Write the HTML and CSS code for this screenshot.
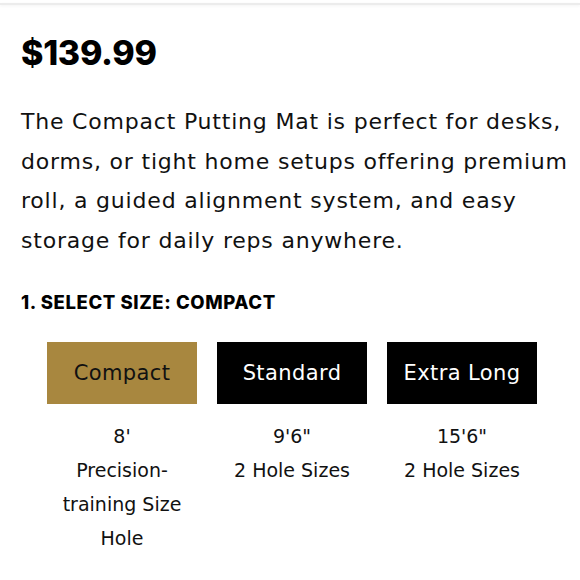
FILE: index.html
```html
<!DOCTYPE html>
<html lang="en">
<head>
<meta charset="utf-8">
<title>Compact Putting Mat</title>
<link rel="stylesheet" href="styles.css">
</head>
<body>
<div class="header-edge"></div>
<main class="product">
  <h2 class="price">$139.99</h2>
  <p class="description">The Compact Putting Mat is perfect for desks, dorms, or tight home setups offering premium roll, a guided alignment system, and easy storage for daily reps anywhere.</p>
  <h3 class="option-title">1. Select Size: Compact</h3>
  <div class="options">
    <div class="option">
      <button class="option-btn selected">Compact</button>
      <div class="option-info">8'<br>Precision-training Size Hole</div>
    </div>
    <div class="option">
      <button class="option-btn">Standard</button>
      <div class="option-info">9'6"<br>2 Hole Sizes</div>
    </div>
    <div class="option">
      <button class="option-btn">Extra Long</button>
      <div class="option-info">15'6"<br>2 Hole Sizes</div>
    </div>
  </div>
</main>
</body>
</html>
```
FILE: styles.css
```css
* { box-sizing: border-box; }
html, body { margin: 0; padding: 0; background: #fff; }
body {
  font-family: "DejaVu Sans", "Open Sans", sans-serif;
  color: #000;
  width: 580px;
  height: 580px;
  overflow: hidden;
}
.header-edge {
  height: 2px;
  margin-top: 3px;
  background: #ececec;
  box-shadow: 0 1px 3px rgba(0,0,0,0.06);
}
.product {
  padding: 0 10px 0 21px;
}
.price {
  margin: 28px 0 0;
  font-family: Inter, "DejaVu Sans", sans-serif;
  font-size: 34px;
  line-height: 40px;
  font-weight: 800;
  letter-spacing: -0.3px;
}
.description {
  margin: 29px 0 0;
  font-size: 22px;
  line-height: 39.6px;
  font-weight: 400;
  letter-spacing: 0.8px;
  color: #111;
}
.option-title {
  margin: 30px 0 0;
  font-family: Inter, "DejaVu Sans", sans-serif;
  font-size: 18.5px;
  line-height: 24px;
  font-weight: 800;
  text-transform: uppercase;
  letter-spacing: 0.6px;
}
.options {
  display: flex;
  gap: 20px;
  margin: 28px 0 0 26px;
}
.option {
  width: 150px;
  display: flex;
  flex-direction: column;
  align-items: center;
}
.option-btn {
  width: 150px;
  height: 62px;
  border: 0;
  background: #000;
  color: #fff;
  font-family: inherit;
  font-size: 21px;
  letter-spacing: 0.4px;
  font-weight: 400;
  display: flex;
  align-items: center;
  justify-content: center;
  padding: 0;
}
.option-btn.selected {
  background: #a8873f;
  color: #111;
}
.option-info {
  margin-top: 15px;
  font-size: 19px;
  line-height: 34px;
  text-align: center;
  color: #111;
}
```
